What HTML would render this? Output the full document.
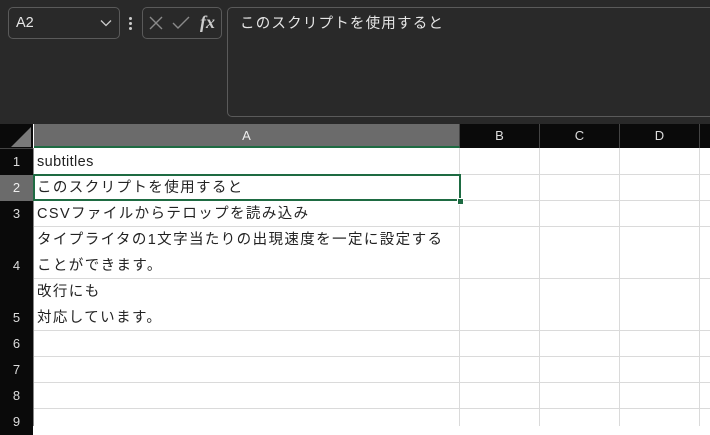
<!DOCTYPE html>
<html><head><meta charset="utf-8"><style>
body{margin:0;width:710px;height:426px;overflow:hidden;background:#fff;font-family:"Liberation Sans","Noto Sans CJK JP",sans-serif;position:relative}
.top{position:absolute;left:0;top:0;width:710px;height:124px;background:#292929}
.box{position:absolute;border:1px solid #5a5a5a;border-radius:5px;box-sizing:border-box}
.ab{position:absolute}
.ch{position:absolute;top:124px;height:24px;background:#0a0a0a;color:#ddd;font-size:13px;text-align:center;line-height:24px;box-sizing:border-box;border-right:1px solid #444}
.rh{position:absolute;left:0;width:33px;background:#0a0a0a;color:#ddd;font-size:13px;text-align:center;box-sizing:border-box}
.hl{position:absolute;left:34px;width:676px;height:1px;background:#dadada}
.vl{position:absolute;top:148px;width:1px;height:278px;background:#dadada}
.t{position:absolute;left:37px;font-size:14.5px;letter-spacing:1.4px;color:#222;white-space:nowrap;line-height:18px}
</style></head><body>
<div class="top"></div>
<div class="box" style="left:8px;top:7px;width:112px;height:32px"></div>
<div class="ab" style="left:16px;top:15px;color:#e6e6e6;font-size:14.5px">A2</div>
<svg class="ab" style="left:100px;top:19px" width="12" height="8"><path d="M1 1.5L6 6.5L11 1.5" stroke="#ccc" fill="none" stroke-width="1.3"/></svg>
<div class="ab" style="left:129px;top:17px;width:3px;height:3px;background:#ccc;border-radius:2px"></div>
<div class="ab" style="left:129px;top:22px;width:3px;height:3px;background:#ccc;border-radius:2px"></div>
<div class="ab" style="left:129px;top:27px;width:3px;height:3px;background:#ccc;border-radius:2px"></div>
<div class="box" style="left:142px;top:7px;width:80px;height:32px"></div>
<svg class="ab" style="left:148px;top:15px" width="16" height="16"><path d="M2 2L14 14M14 2L2 14" stroke="#8a8a8a" stroke-width="1.4"/></svg>
<svg class="ab" style="left:171px;top:15px" width="20" height="16"><path d="M2 8L7 13L18 2" stroke="#8a8a8a" stroke-width="1.4" fill="none"/></svg>
<div class="ab" style="left:200px;top:12px;color:#ccc;font:italic bold 18px 'Liberation Serif',serif">fx</div>
<div class="box" style="left:227px;top:7px;width:500px;height:110px"></div>
<div class="ab" style="left:240px;top:12px;color:#e6e6e6;font-size:14.5px;letter-spacing:1.2px">このスクリプトを使用すると</div>
<div class="ab" style="left:0;top:124px;width:33px;height:24px;background:#0a0a0a"></div>
<svg class="ab" style="left:10px;top:126px" width="22" height="22"><path d="M21 1V21H1Z" fill="#7a7a7a"/></svg>
<div class="ch" style="left:34px;width:426px;background:#6b6b6b;color:#eee;border-bottom:2px solid #1e6b42">A</div>
<div class="ch" style="left:460px;width:80px">B</div>
<div class="ch" style="left:540px;width:80px">C</div>
<div class="ch" style="left:620px;width:80px">D</div>
<div class="ch" style="left:700px;width:20px"></div>
<div class="ab" style="left:0;top:148px;width:34px;height:1px;background:#444"></div>
<div class="rh" style="top:149px;height:26px;line-height:26px">1</div>
<div class="rh" style="top:175px;height:26px;line-height:26px;background:#6b6b6b;color:#eee">2</div>
<div class="rh" style="top:201px;height:26px;line-height:26px">3</div>
<div class="rh" style="top:227px;height:52px;line-height:78px">4</div>
<div class="rh" style="top:279px;height:52px;line-height:78px">5</div>
<div class="rh" style="top:331px;height:26px;line-height:26px">6</div>
<div class="rh" style="top:357px;height:26px;line-height:26px">7</div>
<div class="rh" style="top:383px;height:26px;line-height:26px">8</div>
<div class="rh" style="top:409px;height:26px;line-height:26px">9</div>
<div class="ab" style="left:33px;top:148px;width:1px;height:278px;background:#888"></div>
<div class="hl" style="top:174px"></div><div class="hl" style="top:200px"></div><div class="hl" style="top:226px"></div><div class="hl" style="top:278px"></div><div class="hl" style="top:330px"></div><div class="hl" style="top:356px"></div><div class="hl" style="top:382px"></div><div class="hl" style="top:408px"></div>
<div class="vl" style="left:459px"></div><div class="vl" style="left:539px"></div><div class="vl" style="left:619px"></div><div class="vl" style="left:699px"></div>
<div class="t" style="top:153px;letter-spacing:0.4px">subtitles</div>
<div class="t" style="top:179px">このスクリプトを使用すると</div>
<div class="t" style="top:205px">CSVファイルからテロップを読み込み</div>
<div class="t" style="top:231px">タイプライタの1文字当たりの出現速度を一定に設定する</div>
<div class="t" style="top:257px">ことができます。</div>
<div class="t" style="top:283px">改行にも</div>
<div class="t" style="top:309px">対応しています。</div>
<div class="ab" style="left:33px;top:174px;width:428px;height:27px;border:2px solid #1e6b42;box-sizing:border-box"></div>
<div class="ab" style="left:457px;top:198px;width:5px;height:5px;background:#1e6b42;border:1px solid #fff"></div>
</body></html>
